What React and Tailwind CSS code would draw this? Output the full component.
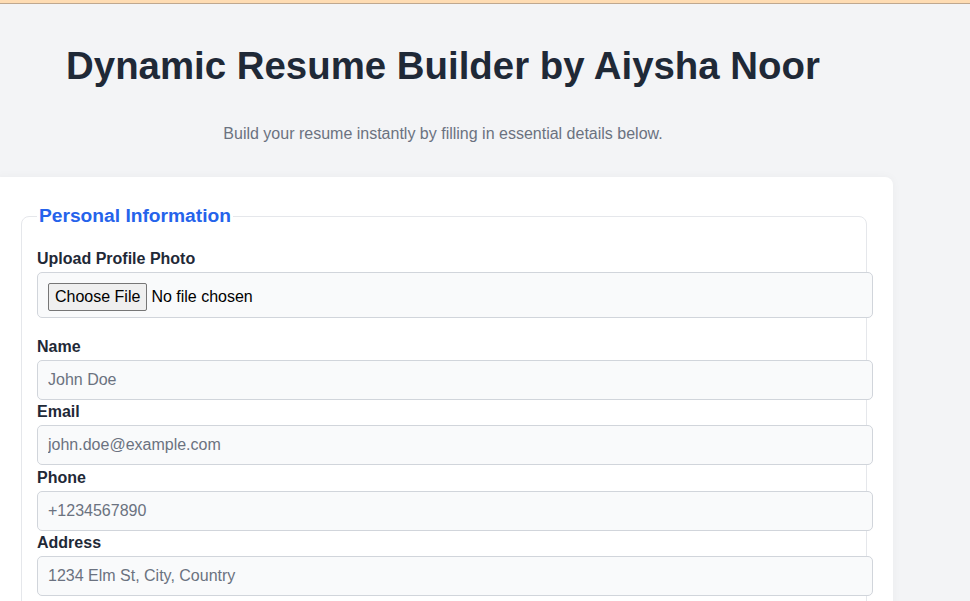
export default function App() {
    const fields = [
        { label: 'Name', type: 'text', placeholder: 'John Doe' },
        { label: 'Email', type: 'email', placeholder: 'john.doe@example.com' },
        { label: 'Phone', type: 'tel', placeholder: '+1234567890' },
        { label: 'Address', type: 'text', placeholder: '1234 Elm St, City, Country' },
    ]

    return (
        <div className="min-h-screen bg-[#f3f4f6] overflow-hidden font-['Liberation_Sans',Arial,sans-serif]">
            {/* top strip */}
            <div className="h-[4px] bg-[#fedcb3] border-b border-[#bfa88f]" />

            <div className="w-[900px] ml-[-7px]">
                {/* Header */}
                <div className="text-center">
                    <h1 className="pt-[40px] text-[38.4px] leading-[44px] font-bold text-[#1f2937]">
                        Dynamic Resume Builder by Aiysha Noor
                    </h1>
                    <p className="mt-[37px] text-[16px] leading-[18px] text-[#6b7280]">
                        Build your resume instantly by filling in essential details below.
                    </p>
                </div>

                {/* Form card */}
                <div className="mt-[34px] bg-white rounded-[8px] pt-[28px] pl-[28px] pr-[26px] pb-[20px] shadow-[0_0_10px_rgba(0,0,0,0.04)]">
                    <fieldset className="border border-[#e5e7eb] rounded-[8px] px-[15px] pt-[23px] pb-[16px]">
                        <legend className="px-[2px] text-[19.2px] leading-[22px] font-bold text-[#2563eb]">
                            Personal Information
                        </legend>

                        <label className="block text-[16px] leading-[18px] font-bold text-[#1f2937] mb-[4px]">
                            Upload Profile Photo
                        </label>
                        <input
                            type="file"
                            accept="image/*"
                            className="box-content block w-full h-[24px] px-[10px] py-[10px] mb-[20px] bg-[#f9fafb] border border-[#d1d5db] rounded-[5px] text-[16px] text-black file:mr-[4px] file:px-[6px] file:py-[1px] file:bg-[#efefef] file:border file:border-[#767676] file:rounded-[2px] file:text-black"
                        />

                        {fields.map((f) => (
                            <div key={f.label}>
                                <label className="block text-[16px] leading-[18px] font-bold text-[#1f2937] mb-[4px]">
                                    {f.label}
                                </label>
                                <input
                                    type={f.type}
                                    placeholder={f.placeholder}
                                    className="box-content block w-full h-[18px] px-[10px] py-[10px] mb-[3.3px] bg-[#f9fafb] border border-[#d1d5db] rounded-[5px] text-[16px] leading-[18px] text-[#1f2937] placeholder:text-[#6b7280] outline-none"
                                />
                            </div>
                        ))}
                    </fieldset>
                </div>
            </div>
        </div>
    )
}
